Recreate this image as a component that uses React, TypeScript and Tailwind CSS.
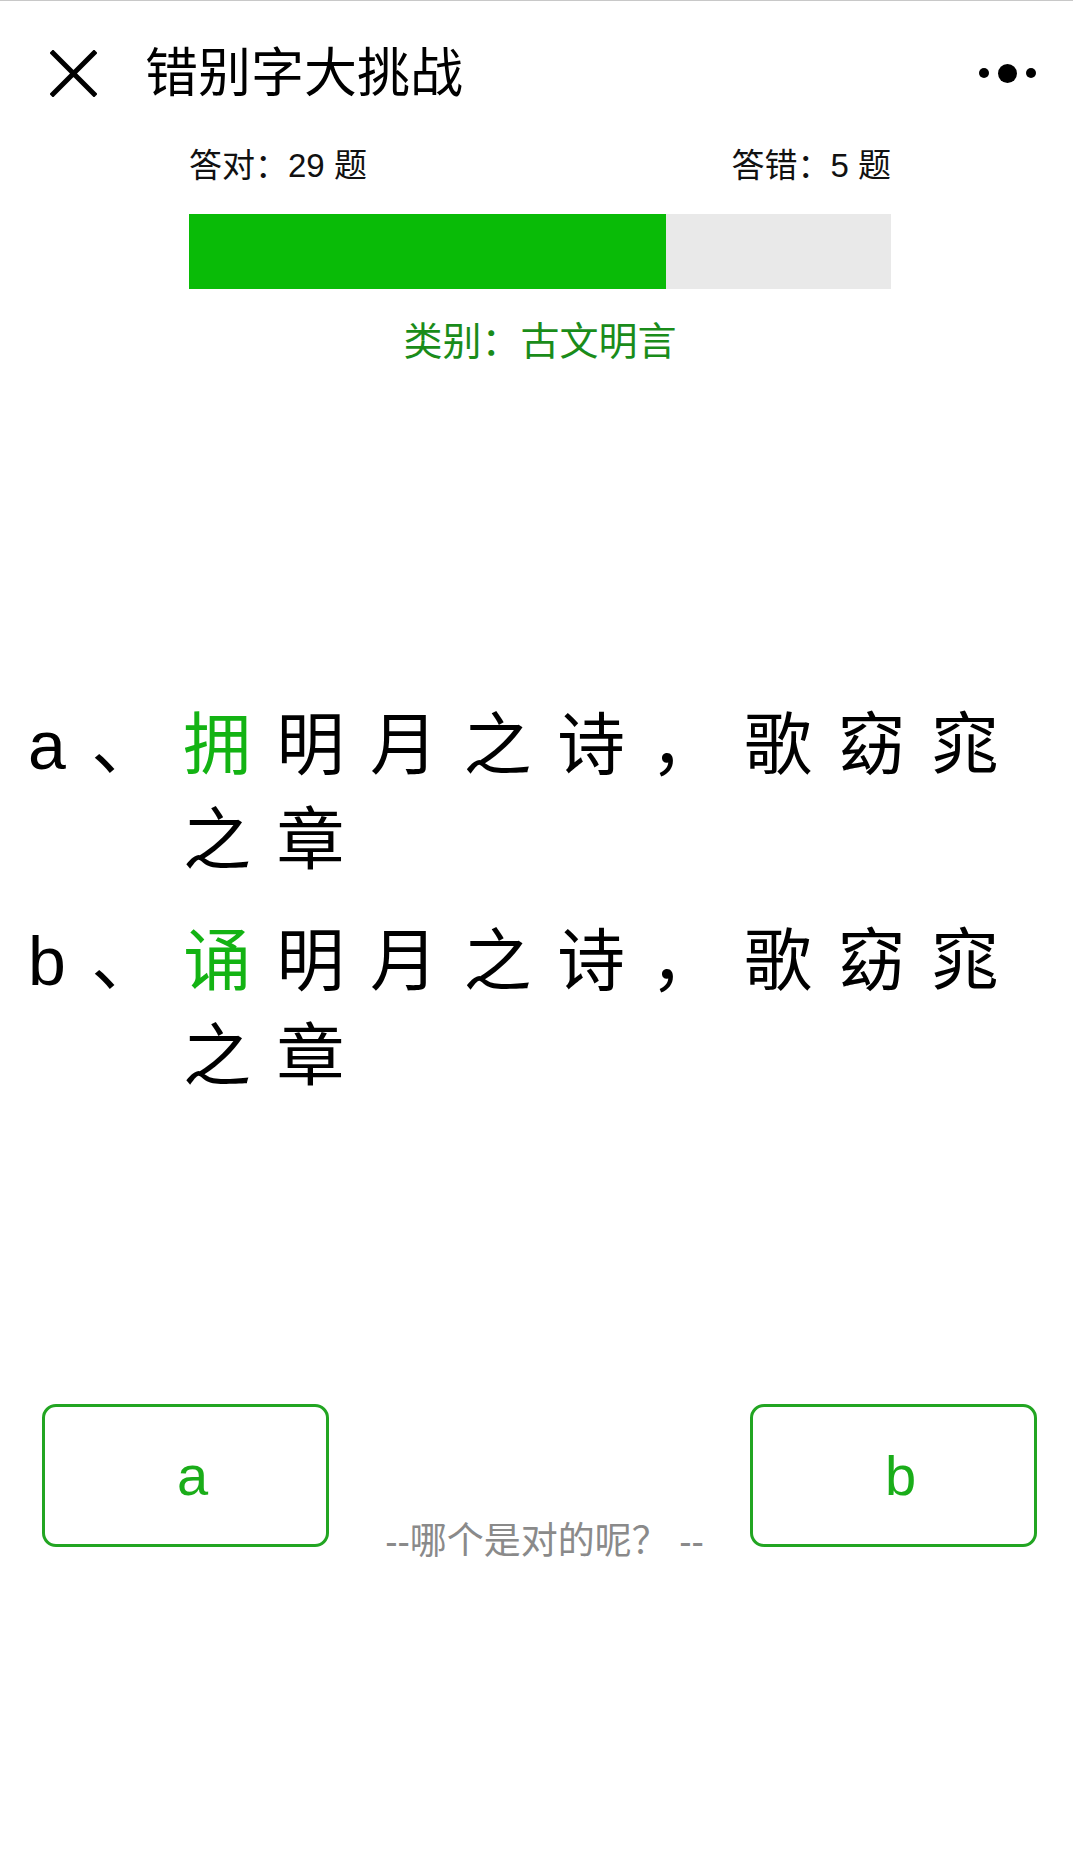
import React from "react";

const FONT = '"Liberation Sans", "Noto Sans CJK SC", sans-serif';

const options = [
  { label: "a", mark: "拥", rest: "明月之诗，歌窈窕之章" },
  { label: "b", mark: "诵", rest: "明月之诗，歌窈窕之章" },
];

function CloseIcon() {
  return (
    <svg width="47" height="47" viewBox="0 0 47 47" fill="none">
      <path d="M3 3L44 44M44 3L3 44" stroke="#000" strokeWidth="5" strokeLinecap="square" />
    </svg>
  );
}

export default function App() {
  const right = 29;
  const percent = 68;

  return (
    <div className="w-[1073px] min-h-[1861px] bg-white text-black border-t border-[#c8c8c8]" style={{ fontFamily: FONT }}>
      {/* header */}
      <div className="h-[144px] flex items-center pl-[50px] pr-[37px]">
        <CloseIcon />
        <div className="ml-[48px] text-[53px] leading-none">错别字大挑战</div>
        <div className="ml-auto flex items-center gap-[9px]">
          <span className="w-[10px] h-[10px] rounded-full bg-black" />
          <span className="w-[19px] h-[19px] rounded-full bg-black" />
          <span className="w-[10px] h-[10px] rounded-full bg-black" />
        </div>
      </div>

      {/* score */}
      <div className="w-[702px] ml-[189px] mt-[1px]">
        <div className="flex justify-between text-[33px] leading-[40px] text-[#111]">
          <span>答对：{right} 题</span>
          <span>答错：5 题</span>
        </div>
        <div className="mt-[28px] h-[75px] bg-[#e9e9e9] flex">
          <div className="h-full bg-[#09bb07]" style={{ width: `${percent}%` }} />
        </div>
        <div className="mt-[28px] text-center text-[39px] leading-[50px] text-[#1a8c1a]">类别：古文明言</div>
      </div>

      {/* question */}
      <div className="mt-[331px] pl-[28px] pr-[28px] flex flex-col gap-[26px]">
        {options.map((o) => (
          <div key={o.label} className="flex text-[68px] leading-[95px]">
            <span className="w-[155px] shrink-0">
              <span className="tracking-[25.5px]">{o.label}</span>
              <span>、</span>
            </span>
            <p className="flex-1 tracking-[25.5px]">
              <span className="text-[#13b313]">{o.mark}</span>
              {o.rest}
            </p>
          </div>
        ))}
      </div>

      {/* answers */}
      <div className="mt-[300px] pl-[42px] pr-[36px] flex items-start justify-between">
        <button className="w-[287px] h-[143px] border-[3px] border-[#22a522] rounded-[14px] text-[56px] text-[#1aad19] flex items-center justify-center pl-[14px]">
          a
        </button>
        <div className="mt-[118px] ml-[10px] text-[37px] leading-[40px] text-[#8a8a8a]">--哪个是对的呢？ --</div>
        <button className="w-[287px] h-[143px] border-[3px] border-[#22a522] rounded-[14px] text-[56px] text-[#1aad19] flex items-center justify-center pl-[14px]">
          b
        </button>
      </div>
    </div>
  );
}
